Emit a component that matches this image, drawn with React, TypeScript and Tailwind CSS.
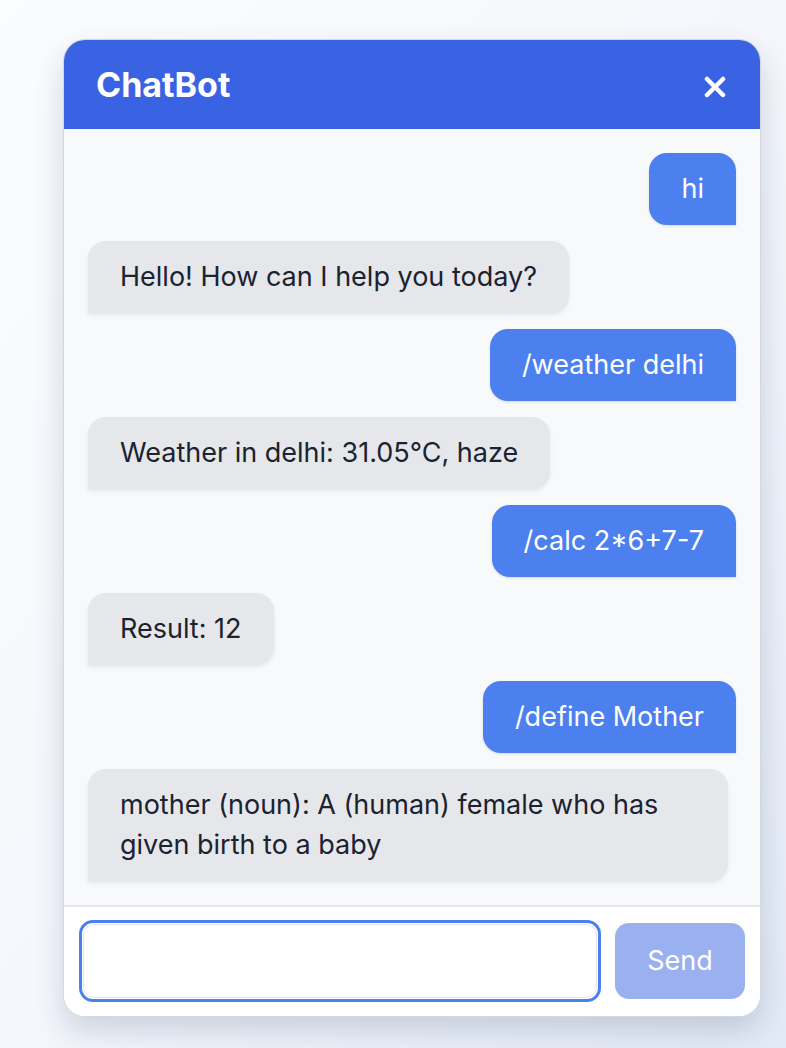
import React from "react";

type Msg = { from: "user" | "bot"; text: string };

const messages: Msg[] = [
  { from: "user", text: "hi" },
  { from: "bot", text: "Hello! How can I help you today?" },
  { from: "user", text: "/weather delhi" },
  { from: "bot", text: "Weather in delhi: 31.05°C, haze" },
  { from: "user", text: "/calc 2*6+7-7" },
  { from: "bot", text: "Result: 12" },
  { from: "user", text: "/define Mother" },
  { from: "bot", text: "mother (noun): A (human) female who has given birth to a baby" },
];

function Bubble({ msg }: { msg: Msg }) {
  if (msg.from === "user") {
    return (
      <div className="flex justify-end">
        <div className="max-w-[640px] rounded-[18px] rounded-br-none bg-[#4b80ee] px-8 py-4 text-[27px] leading-[40px] text-white shadow-sm">
          {msg.text}
        </div>
      </div>
    );
  }
  return (
    <div className="flex justify-start">
      <div className="max-w-[640px] rounded-[18px] rounded-bl-none bg-[#e5e7eb] px-8 py-4 text-[27px] leading-[40px] text-[#1b2230] shadow-[0_2px_4px_rgba(0,0,0,0.08)]">
        {msg.text}
      </div>
    </div>
  );
}

export default function App() {
  return (
    <div
      className="min-h-[1048px] w-full bg-gradient-to-br from-[#fbfcfe] via-[#f5f7fc] to-[#e3eaf7] pl-[63px] pt-[39px]"
      style={{ fontFamily: "Inter, 'Noto Sans', sans-serif" }}
    >
      <div className="flex w-[698px] flex-col overflow-hidden rounded-[22px] border border-[#d4d7dd] bg-white shadow-[0_14px_30px_rgba(30,50,90,0.18)]">
        <div className="flex h-[89px] items-center justify-between bg-[#3a63e3] pl-8 pr-[34px]">
          <h1 className="text-[34px] font-bold text-white">ChatBot</h1>
          <svg width="22" height="22" viewBox="0 0 22 22" className="mt-1">
            <path d="M3 3 L19 19 M19 3 L3 19" stroke="white" strokeWidth="4.5" strokeLinecap="round" />
          </svg>
        </div>
        <div className="flex flex-col gap-4 bg-[#f8f9fb] px-6 py-6">
          {messages.map((m, i) => (
            <Bubble key={i} msg={m} />
          ))}
        </div>
        <div className="flex items-center gap-[14px] border-t-2 border-[#e5e7eb] bg-white px-[15px] pb-[14px] pt-[13px]">
          <div className="h-[82px] flex-1 rounded-[14px] border-[3px] border-[#4b80ee] p-[1px]">
            <input className="h-full w-full rounded-[11px] border border-[#e2e4e8] bg-white px-4 text-[27px] outline-none" />
          </div>
          <button className="h-[76px] w-[130px] rounded-[14px] bg-[#9bb1ef] text-[27px] text-white">
            Send
          </button>
        </div>
      </div>
    </div>
  );
}
